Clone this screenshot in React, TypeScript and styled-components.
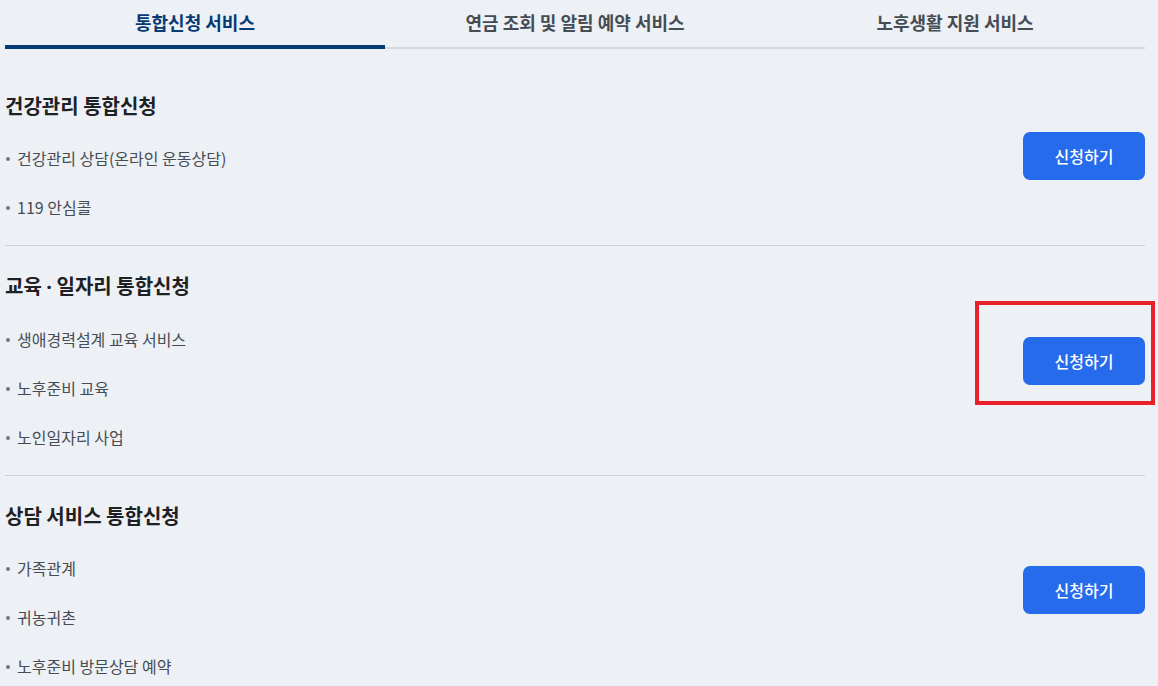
import React from 'react'
import styled, { createGlobalStyle } from 'styled-components'

const GlobalStyle = createGlobalStyle`
  html, body {
    margin: 0;
    padding: 0;
    background: #edf0f5;
    font-family: "Noto Sans CJK KR", "Noto Sans", sans-serif;
  }
`

const tabs = ['통합신청 서비스', '연금 조회 및 알림 예약 서비스', '노후생활 지원 서비스']

const sections = [
  { id: 1, title: '건강관리 통합신청', items: ['건강관리 상담(온라인 운동상담)', '119 안심콜'] },
  { id: 2, title: '교육 · 일자리 통합신청', items: ['생애경력설계 교육 서비스', '노후준비 교육', '노인일자리 사업'], marked: true },
  { id: 3, title: '상담 서비스 통합신청', items: ['가족관계', '귀농귀촌', '노후준비 방문상담 예약'] },
]

// the middle dot is drawn full width by the CJK font, so give it a latin one
const renderTitle = (title: string) => {
  const parts = title.split('·')
  return parts.map((p, i) => <React.Fragment key={i}>
    {i > 0 && <Dot>·</Dot>}
    {p}
  </React.Fragment>)
}

const App = () => {
  return <>
    <GlobalStyle />
    <Page>
      <TabBar>
        {tabs.map((t, i) => <Tab key={t} $active={i === 0}>{t}</Tab>)}
      </TabBar>
      <List>
        {sections.map((s) => <Section key={s.id}>
          <Content>
            <Title>{renderTitle(s.title)}</Title>
            {s.items.map((it) => <Item key={it}>{it}</Item>)}
          </Content>
          <ApplyButton type="button">신청하기</ApplyButton>
          {s.marked && <Highlight />}
        </Section>)}
      </List>
    </Page>
  </>
}

const Page = styled.div`
  width: 1140px;
  margin-left: 5px;
`

const TabBar = styled.div`
  display: grid;
  grid-template-columns: repeat(3, 1fr);
  border-bottom: 2px solid #d6d9de;
`

const Tab = styled.div<{ $active?: boolean }>`
  position: relative;
  height: 47px;
  padding-bottom: 4px;
  box-sizing: border-box;
  display: flex;
  align-items: center;
  justify-content: center;
  font-size: 18px;
  font-weight: 700;
  color: ${(p) => (p.$active ? '#063a74' : '#464c53')};
  &::after {
    content: '';
    display: ${(p) => (p.$active ? 'block' : 'none')};
    position: absolute;
    left: 0;
    right: 0;
    bottom: -2px;
    height: 4px;
    background: #063a74;
  }
`

const List = styled.div`
  margin-top: 17px;
`

const Section = styled.section`
  position: relative;
  display: flex;
  align-items: center;
  justify-content: space-between;
  padding: 26px 0;
  border-bottom: 1px solid #cdd1d5;
  &:last-child {
    border-bottom: none;
  }
`

const Content = styled.div`
  display: flex;
  flex-direction: column;
  gap: 25px;
`

const Title = styled.h3`
  margin: 0 0 1px;
  font-size: 20px;
  line-height: 28px;
  font-weight: 700;
  color: #1e2124;
`

const Dot = styled.span`
  font-family: "Noto Sans", sans-serif;
`

const Item = styled.div`
  position: relative;
  padding-left: 12px;
  font-size: 16px;
  line-height: 24px;
  color: #464c53;
  &::before {
    content: '';
    position: absolute;
    left: 1px;
    top: 11px;
    width: 4px;
    height: 4px;
    border-radius: 50%;
    background: #6d7882;
  }
`

const ApplyButton = styled.button`
  width: 122px;
  height: 48px;
  border: none;
  border-radius: 7px;
  background: #256bec;
  color: #fff;
  font-family: inherit;
  font-size: 16px;
  font-weight: 500;
  cursor: pointer;
`

const Highlight = styled.div`
  position: absolute;
  top: 55px;
  right: -10px;
  width: 180px;
  height: 104px;
  box-sizing: border-box;
  border: 4px solid #e8202a;
  pointer-events: none;
`

export default App
